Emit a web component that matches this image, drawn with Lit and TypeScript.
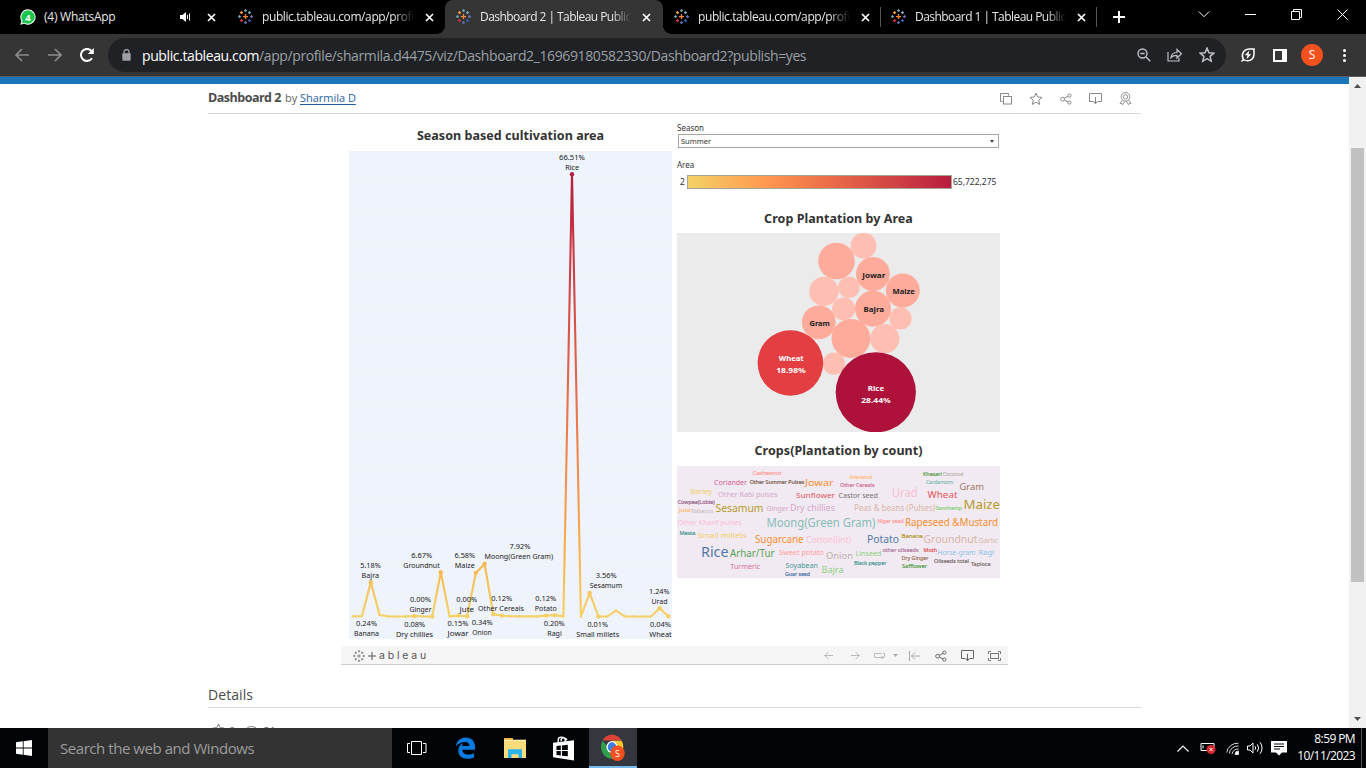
import { LitElement, html, svg, css } from "lit";
import { customElement } from "lit/decorators.js";

type Word = [string, number, number, number, number, string];

const WORDS: Word[] = [
  ["Cashewnut", 752.7, 28.7, 474.7, 5, "#ff9d9a"],
  ["Coriander", 714, 33, 485, 7, "#d0618e"],
  ["Other Summer Pulses", 749.7, 54.5, 484, 5.2, "#79604e"],
  ["Jowar", 805, 28.5, 485.5, 9.6, "#f28e2b"],
  ["Barley", 690.5, 21.5, 494, 7, "#f1ce63"],
  ["Other Rabi pulses", 718.3, 59, 497, 7, "#d4a6c8"],
  ["Sunflower", 796, 39, 498, 7.5, "#e15759"],
  ["Cowpea(Lobia)", 677.7, 37, 504, 5.5, "#946083"],
  ["Jute", 679, 11.5, 512.3, 5.5, "#ffbe7d"],
  ["Tobacco", 690.7, 22.5, 513, 6, "#bab0ac"],
  ["Sesamum", 715.5, 48, 512, 10.8, "#b6992d"],
  ["Ginger", 766.5, 22, 511, 7, "#d4a6c8"],
  ["Dry chillies", 790, 45, 511, 9, "#d4a6c8"],
  ["Other Kharif pulses", 677.5, 64.5, 525, 7.3, "#fabfd2"],
  ["Moong(Green Gram)", 766.5, 109, 527, 12.2, "#86bcb6"],
  ["Mesta", 679.5, 16, 535, 5.5, "#499894"],
  ["Small millets", 697.5, 49, 538, 7.7, "#f1ce63"],
  ["Sugarcane", 755, 48.5, 542.5, 10, "#f28e2b"],
  ["Cotton(lint)", 806, 45, 542.7, 8.5, "#fabfd2"],
  ["Rice", 701, 27.5, 557, 14, "#4e79a7"],
  ["Arhar/Tur", 730, 44.5, 557, 10.3, "#59a14f"],
  ["Sweet potato", 779, 45, 555, 7, "#ff9d9a"],
  ["Onion", 826, 27, 559, 9.8, "#bab0ac"],
  ["Turmeric", 730.3, 30, 569, 7, "#d37295"],
  ["Soyabean", 785.5, 32.5, 567.5, 7.3, "#499894"],
  ["Guar seed", 785, 25, 576, 5, "#4e79a7"],
  ["Bajra", 821.5, 22, 572.5, 9.2, "#8cd17d"],
  ["Arecanut", 849.5, 23, 479, 5, "#ffbe7d"],
  ["Other Cereals", 840, 34.5, 487, 5.5, "#d37295"],
  ["Castor seed", 838.5, 39.5, 498, 7, "#79706e"],
  ["Urad", 892, 25.5, 497, 12, "#fabfd2"],
  ["Khesari", 923, 19, 476, 5.2, "#59a14f"],
  ["Coconut", 943, 20.5, 476, 5.5, "#bab0ac"],
  ["Cardamom", 926, 27, 484, 5.5, "#86bcb6"],
  ["Gram", 959.5, 24.5, 490, 9.2, "#9d7660"],
  ["Wheat", 927.5, 30, 498, 9.8, "#e15759"],
  ["Peas & beans (Pulses)", 854, 81, 511, 8.2, "#d7b5a6"],
  ["Sannhemp", 935.5, 26.5, 510, 5.3, "#8cd17d"],
  ["Maize", 963.5, 36.5, 509, 13.3, "#b6992d"],
  ["Niger seed", 877.5, 26.2, 523, 5, "#ff9d9a"],
  ["Rapeseed &Mustard", 905, 93, 526, 10, "#f28e2b"],
  ["Potato", 867, 32, 542.5, 10, "#4e79a7"],
  ["Banana", 901.5, 21.5, 538, 5.3, "#b6992d"],
  ["Groundnut", 923.5, 54, 542.5, 11, "#d7b5a6"],
  ["Garlic", 978.5, 19.5, 543, 7, "#d7b5a6"],
  ["Linseed", 855.5, 26, 556, 7.3, "#8cd17d"],
  ["other oilseeds", 882.5, 36, 552, 5.5, "#b07aa1"],
  ["Moth", 923.5, 13.5, 552, 5.5, "#e15759"],
  ["Horse-gram", 937.5, 38, 555, 7.3, "#8dc1e6"],
  ["Ragi", 978.5, 15.5, 555, 7.3, "#8dc1e6"],
  ["Black pepper", 854, 32.5, 565, 5.3, "#499894"],
  ["Dry Ginger", 901.5, 27, 560, 5.5, "#9d7660"],
  ["Safflower", 902, 25, 568, 5.3, "#59a14f"],
  ["Oilseeds total", 934, 35, 563, 5.5, "#79706e"],
  ["Tapioca", 971, 19.5, 566, 5.5, "#79706e"],
];

const BUBBLES: [number, number, number, string][] = [
  [836.5, 261, 18.3, "#ffab9c"],
  [863.5, 245.7, 12.9, "#ffbeb2"],
  [873, 274, 17, "#ffab9c"],
  [902.8, 290.5, 17, "#ffab9c"],
  [823.9, 291.4, 14.6, "#ffbeb2"],
  [848.9, 287.4, 10.8, "#ffbeb2"],
  [843.6, 308.9, 11.5, "#ffbeb2"],
  [873, 308.7, 18, "#ffab9c"],
  [818.8, 322.3, 16.9, "#ffab9c"],
  [851, 338.5, 19.4, "#ffab9c"],
  [884.8, 338.7, 14.6, "#ffbeb2"],
  [900.4, 318.4, 11.1, "#ffbeb2"],
  [834, 363.7, 11.1, "#ffbeb2"],
  [790.4, 363, 32.8, "#e33f43"],
  [875.8, 392.3, 40.1, "#ae123a"],
];

const BUBBLE_LABELS: [string, number, number, number, string][] = [
  ["Jowar", 873.8, 277.8, 23, "#1b1b1b"],
  ["Maize", 903.7, 294, 22.5, "#1b1b1b"],
  ["Bajra", 873.8, 312.3, 20.5, "#1b1b1b"],
  ["Gram", 819.7, 326, 20.5, "#1b1b1b"],
  ["Wheat", 791.2, 360.6, 25, "#fff"],
  ["18.98%", 791, 372.5, 29.5, "#fff"],
  ["Rice", 876, 390.8, 16.5, "#fff"],
  ["28.44%", 876, 402.5, 29.5, "#fff"],
];

const LINE: [number, number][] = [
  [352.7, 616.4], [362, 616.1], [370.8, 582.3], [379.6, 615], [388.3, 616.4], [397, 616.5],
  [405.8, 616.4], [414.6, 616], [423.3, 616.4], [432.2, 616.6], [440.8, 572.3], [449.6, 616.4],
  [458.4, 615.6], [467.2, 616.4], [475.8, 572.9], [484.6, 564], [493.3, 614.2], [502, 615.6],
  [510.8, 616.3], [519.6, 616.4], [528.4, 616.4], [537.1, 616.4], [545.9, 615.6], [554.6, 615.1],
  [563.4, 616.4], [572, 174.2], [580.9, 616.5], [589.7, 593], [598.4, 616.5], [607.2, 616.5],
  [615.9, 610.7], [624.7, 616.4], [633.4, 616.5], [642.2, 616.5], [651, 616.4], [659.6, 608.2],
  [668.4, 616.2],
];
const MARKED = new Set([2, 7, 9, 10, 12, 13, 14, 15, 16, 17, 22, 23, 25, 27, 28, 35, 36]);

const LABELS: [string, number, number, number][] = [
  ["66.51%", 572, 160, 26], ["Rice", 572.2, 170, 14],
  ["5.18%", 370.5, 568, 20.5], ["Bajra", 370.3, 578, 17.5],
  ["6.67%", 421.7, 558, 21], ["Groundnut", 421.5, 568, 36.5],
  ["6.58%", 464.8, 558, 20.5], ["Maize", 464.8, 568, 20],
  ["7.92%", 520, 549, 21], ["Moong(Green Gram)", 518.8, 559, 68.5],
  ["3.56%", 606.2, 578, 21], ["Sesamum", 606, 588, 32.5],
  ["1.24%", 659.3, 594, 20.5], ["Urad", 659.5, 604, 16],
  ["0.00%", 420.5, 602, 21], ["Ginger", 420.5, 612, 22],
  ["0.00%", 466.7, 602, 21], ["Jute", 466.8, 612, 14.5],
  ["0.12%", 501.8, 601, 21], ["Other Cereals", 501, 611, 46],
  ["0.12%", 545.8, 601, 21], ["Potato", 545.8, 611, 22],
  ["0.24%", 366.6, 626, 21], ["Banana", 366.5, 636, 25],
  ["0.08%", 414.7, 627, 21], ["Dry chillies", 414.5, 637, 37],
  ["0.15%", 458, 626, 21], ["Jowar", 458, 636, 21],
  ["0.34%", 482.2, 625, 21], ["Onion", 482, 635, 19.5],
  ["0.20%", 554.3, 626, 21], ["Ragi", 554.5, 636, 14.5],
  ["0.01%", 597.7, 627, 20.5], ["Small millets", 597.7, 637, 43],
  ["0.04%", 660.5, 627, 21], ["Wheat", 660.5, 637, 22.5],
];

const plus = (x: number, y: number, r: number, c: string, w: number) =>
  svg`<path d="M${x - r} ${y}h${2 * r}M${x} ${y - r}v${2 * r}" stroke=${c} stroke-width=${w} fill="none"/>`;

/** The nine-plus Tableau mark; pass a single colour for the monochrome version. */
const tableauMark = (size: number, mono?: string) => {
  const w = mono ? 1 : 1.25;
  return html`<svg class="mark" width=${size} height=${size} viewBox="0 0 15 15">
    ${plus(7.5, 7.5, 2.5, mono ?? "#f98536", w)}
    ${plus(3.5, 3.5, 1.5, mono ?? "#f79a2e", w)} ${plus(11.5, 3.5, 1.5, mono ?? "#6fa6ba", w)}
    ${plus(3.5, 11.5, 1.5, mono ?? "#e02c42", w)} ${plus(11.5, 11.5, 1.5, mono ?? "#2f5fae", w)}
    ${plus(7.5, 1.5, 1.5, mono ?? "#7099a6", w)} ${plus(7.5, 13.5, 1.5, mono ?? "#5f6bab", w)}
    ${plus(1.5, 7.5, 1.5, mono ?? "#7099a6", w)} ${plus(13.5, 7.5, 1.5, mono ?? "#6c6fb8", w)}
  </svg>`;
};

const cross = html`<svg class="x" width="9" height="9" viewBox="0 0 9 9"><path d="M1 1l7 7M8 1l-7 7" stroke="#fff" stroke-width="1.7"/></svg>`;

const shareIcon = (c: string) => html`<svg width="12" height="12" viewBox="0 0 12 12" fill="none" stroke=${c}>
  <circle cx="2.6" cy="6.2" r="1.9"/><circle cx="9.4" cy="2.6" r="1.6"/><circle cx="9.4" cy="9.6" r="1.6"/>
  <path d="M4.3 5.3L8 3.4M4.3 7.1L8 9"/></svg>`;
const downloadIcon = (c: string) => html`<svg width="13" height="12" viewBox="0 0 13 12" fill="none" stroke=${c}>
  <path d="M4.5 8.5H.5v-8h12v8h-4M6.5 4v7"/><path d="M4.3 8.8l2.2 2.4 2.2-2.4z" fill=${c} stroke="none"/></svg>`;
const star = (s: number, c: string, w: number) => html`<svg width=${s} height=${s} viewBox="0 0 14 14">
  <path d="M7 1l1.7 4 4.3.4-3.3 2.8 1 4.3L7 10.2l-3.7 2.3 1-4.3L1 5.4 5.3 5z" fill="none" stroke=${c} stroke-width=${w}/></svg>`;

@customElement("app-root")
export class AppRoot extends LitElement {
  static styles = css`
    :host { display: flex; flex-direction: column; width: 1366px; height: 768px; overflow: hidden;
      font-family: "Open Sans", "Noto Sans", sans-serif; background: #fff; }
    * { box-sizing: border-box; }
    svg { display: block; flex: none; }
    .tabs { height: 34px; background: #000; display: flex; padding-left: 10px; flex: none; color: #e8e8e8; }
    .tab { width: 218px; flex: none; display: flex; align-items: center; padding-left: 10px; position: relative; font-size: 12px; height: 34px; }
    .tab:nth-child(2) { width: 217px; }
    .tab:nth-child(3), .tab:nth-child(4) { padding-left: 11px; }
    .tab:nth-child(5) { width: 216px; }
    .tab .mark { margin-top: -1px; }
    .tab .t { margin-left: 9px; width: 152px; white-space: nowrap; overflow: hidden; letter-spacing: -0.4px; line-height: 18px;
      -webkit-mask-image: linear-gradient(90deg, #000 87%, transparent 100%); margin-top: -1px; }
    .tab .t.dash { letter-spacing: -0.55px; width: 151px; }
    .tab .t.wa { width: 136px; letter-spacing: -0.25px; margin-left: 8px; -webkit-mask-image: none; }
    .tab .x { margin-left: 11px; }
    .tab .x.first { margin-left: 16px; }
    .tab.sep { border-right: 1px solid #555; height: 20px; margin-top: 7px; }
    .tab.on { background: #353535; border-radius: 8px 8px 0 0; }
    .tab.on::before, .tab.on::after { content: ""; position: absolute; bottom: 0; width: 8px; height: 8px; }
    .tab.on::before { left: -8px; background: radial-gradient(circle at 0 0, transparent 7.5px, #353535 8px); }
    .tab.on::after { right: -8px; background: radial-gradient(circle at 100% 0, transparent 7.5px, #353535 8px); }
    .plus { margin: 11px 0 0 16px; }
    .win { margin-left: auto; display: flex; align-items: center; height: 29px; gap: 35px; padding-right: 18px; }
    .bar { height: 43px; flex: none; background: #353535; border-bottom: 1px solid #5c5c5c; display: flex; align-items: center; padding-left: 14px; }
    .nav { display: flex; gap: 17px; align-items: center; width: 94px; }
    .omni { width: 1118px; height: 34px; border-radius: 17px; background: #202124; display: flex; align-items: center; padding: 0 11px 0 14px; font-size: 14px; color: #9aa0a6; }
    .url { margin-left: 11px; letter-spacing: -0.39px; flex: 1; white-space: nowrap; }
    .url b { font-weight: 400; color: #fff; }
    .omni .ic { display: flex; gap: 16px; align-items: center; }
    .ext { display: flex; align-items: center; margin-left: 14px; }
    .panel { margin-left: 17px; }
    .av { width: 22px; height: 22px; border-radius: 50%; background: #f4511e; color: #fff; font-size: 12px; line-height: 22px; text-align: center; margin: 0 20px 0 14px; }
    .main { flex: 1; display: flex; min-height: 0; }
    .page { width: 1349px; overflow: hidden; border-top: 7px solid #1b75bb; padding: 0 209px 0 208px; }
    .scroll { width: 17px; background: #f1f1f1; display: flex; flex-direction: column; align-items: center; padding: 7px 0; }
    .thumb { width: 13px; height: 434px; background: #c1c1c1; margin-top: 60px; margin-bottom: auto; }
    .head { height: 30px; border-bottom: 1px solid #d9d9d9; width: 933px; display: flex; align-items: center; color: #666; }
    .head h1 { font-size: 12.5px; margin: -2px 4px 0 0; color: #4a4a4a; font-weight: 700; letter-spacing: -0.5px; }
    .head span { font-size: 11px; letter-spacing: -0.02px; margin-top: -2px; }
    .head a { color: #1f5f9e; text-decoration: underline; text-underline-offset: 2px; }
    .acts { margin-left: auto; display: flex; gap: 17px; align-items: center; padding-right: 9px; }
    .viz { width: 667px; margin-left: 133px; height: 551px; display: flex; flex-direction: column; }
    .cols { display: flex; gap: 5px; padding-left: 8px; height: 532px; font-family: "Noto Sans", sans-serif; }
    .left, .right { width: 323px; display: flex; flex-direction: column; }
    h2 { margin: 0; text-align: center; font-size: 12.5px; color: #333; font-weight: 700; white-space: nowrap; }
    .left h2 { height: 37px; line-height: 43px; letter-spacing: .05px; }
    .small { font-size: 8px; color: #333; line-height: 10px; }
    .sel { height: 14px; width: 321px; margin: 1px 0 0 1px; border: 1px solid #a6a6a6; display: flex; align-items: center; justify-content: space-between; padding: 0 4px 0 2px; font-size: 7.5px; }
    .season { margin-top: 9px; }
    .area { margin-top: 12px; }
    .legend { display: flex; height: 14px; align-items: center; padding-left: 3px; margin-top: 5px; font-size: 8.5px; }
    .lo { width: 5px; }
    .ramp { width: 265px; height: 14px; border: 1px solid #a6a69a; margin: 0 1px 0 2px;
      background: linear-gradient(90deg, #f4d166, #ff984f 30%, #ea6a48 55%, #cf4044 80%, #b71d3e); }
    .t2 { height: 44px; line-height: 59px; letter-spacing: .05px; }
    .t3 { height: 34px; line-height: 37px; letter-spacing: .08px; }
    .vbar { height: 19px; background: #f5f5f5; border-bottom: 1px solid #ccc; display: flex; align-items: center; padding: 1px 7px 0 12px; }
    .brand { font: 10.5px "Inter", sans-serif; letter-spacing: 2.8px; color: #555; margin-left: 3px; display: flex; align-items: center; }
    .brand svg { margin-right: 3px; }
    .vbar .r { margin-left: auto; display: flex; align-items: center; }
    .redo { margin-left: 18px; } .replay { margin-left: 13px; } .caret { margin-left: 7px; }
    .revert { margin: 0 15px 0 11px; } .dl { margin-left: 14px; } .full { margin-left: 14px; }
    .details { margin-top: 20px; height: 23px; width: 933px; border-bottom: 1px solid #d9d9d9; font-size: 14px; line-height: 20px; color: #4a4a4a; letter-spacing: .08px; }
    .stats { display: flex; margin: 16px 0 0 4px; gap: 4px; font-size: 11px; color: #666; line-height: 14px; align-items: flex-start; }
    .stats svg { margin-top: -1px; }
    .stats .eye { margin: 1px 0 0 5px; }
    .task { height: 40px; flex: none; background: #020408; display: flex; align-items: center; }
    .start { width: 48px; display: flex; justify-content: center; }
    .search { width: 344px; height: 40px; background: #333; color: #9c9c9c; font-size: 15px; line-height: 40px; padding-left: 12px; letter-spacing: -0.45px; }
    .app { width: 49px; height: 40px; display: flex; justify-content: center; align-items: center; }
    .app.on { width: 48px; margin-left: 1px; background: #34383e; border-bottom: 2px solid #76b9ed; padding-top: 2px; }
    .tray { margin-left: auto; display: flex; align-items: center; color: #fff; height: 40px; }
    .batt { margin-left: 11px; } .wifi { margin-left: 10px; } .vol { margin-left: 8px; } .msg { margin-left: 7px; }
    .clock { width: 65px; font-size: 12px; line-height: 17px; text-align: right; letter-spacing: -0.6px; margin-left: 3px; padding-bottom: 3px; white-space: nowrap; }
    .peek { width: 5px; height: 40px; border-left: 1px solid #555; margin-left: 6px; }
  `;

  private tab(text: string, cls: string) {
    return html`<div class="tab ${cls}">${tableauMark(15)}<span class="t ${text[0] === "D" ? "dash" : ""}">${text}</span>${cross}</div>`;
  }

  private lineChart() {
    const pts = LINE.map((p) => p.join(",")).join(" ");
    return html`<svg width="323" height="488" viewBox="349 151 323 488">
      <defs><linearGradient id="heat" gradientUnits="userSpaceOnUse" x1="0" y1="616" x2="0" y2="174">
        <stop offset="0" stop-color="#f4d166"/><stop offset=".12" stop-color="#f9b64f"/><stop offset=".3" stop-color="#f3934f"/>
        <stop offset=".55" stop-color="#e2644b"/><stop offset=".8" stop-color="#cc3c45"/><stop offset="1" stop-color="#b71d3e"/>
      </linearGradient></defs>
      <rect x="349" y="151" width="323" height="488" fill="#eff3fb"/>
      ${[182, 214, 246, 278, 310, 342, 374, 406, 438, 470, 502, 534, 566, 598].map((y) => svg`<path d="M349 ${y}.5h323" stroke="#eef2f7"/>`)}
      <polyline points=${pts} fill="none" stroke="url(#heat)" stroke-width="2.1" stroke-linejoin="round"/>
      ${LINE.map(([x, y], i) => svg`<circle cx=${x} cy=${y} r=${MARKED.has(i) ? 2.2 : 1.2} fill="url(#heat)"/>`)}
      ${LABELS.map(([t, x, y, w]) => svg`<text x=${x} y=${y} text-anchor="middle" font-size="7.3" fill="#222" textLength=${w} lengthAdjust="spacingAndGlyphs">${t}</text>`)}
    </svg>`;
  }

  private bubbles() {
    return html`<svg width="323" height="199" viewBox="677 233 323 199">
      <rect x="677" y="233" width="323" height="199" fill="#ebebeb"/>
      ${BUBBLES.map(([x, y, r, c]) => svg`<circle cx=${x} cy=${y} r=${r} fill=${c}/>`)}
      ${BUBBLE_LABELS.map(([t, x, y, w, c]) => svg`<text x=${x} y=${y} text-anchor="middle" font-size="7.8" font-weight="700" fill=${c} textLength=${w} lengthAdjust="spacingAndGlyphs">${t}</text>`)}
    </svg>`;
  }

  private cloud() {
    return html`<svg width="323" height="112" viewBox="677 466 323 112">
      <rect x="677" y="466" width="323" height="112" fill="#f2eaf3"/>
      ${WORDS.map(([t, x, w, y, s, c]) => svg`<text x=${x} y=${y} font-size=${s} fill=${c} stroke=${c} stroke-width=${s < 6 ? 0.2 : 0} textLength=${w} lengthAdjust="spacingAndGlyphs">${t}</text>`)}
    </svg>`;
  }

  render() {
    return html`
      <div class="tabs">
        <div class="tab">
          <svg width="16" height="16" viewBox="0 0 16 16"><path d="M8 .3a7.7 7.7 0 1 1-3.7 14.5L.3 15.8l1.1-3.9A7.7 7.7 0 0 1 8 .3z" fill="#fff"/><path d="M8 1.3a6.7 6.7 0 1 1-3.5 12.4l-2.7.7.8-2.6A6.7 6.7 0 0 1 8 1.3z" fill="#1bc64c"/><text x="8" y="11.5" font-size="9.5" font-weight="700" fill="#fff" text-anchor="middle">4</text></svg>
          <span class="t wa">(4) WhatsApp</span>
          <svg width="11" height="10" viewBox="0 0 11 10"><path d="M0 3h2.5L6 0v10L2.5 7H0z" fill="#fff"/><path d="M7.5 3v4M9.5 1.5v7" stroke="#fff"/></svg>
          <svg class="x first" width="9" height="9" viewBox="0 0 9 9"><path d="M1 1l7 7M8 1l-7 7" stroke="#fff" stroke-width="1.7"/></svg>
        </div>
        ${this.tab("public.tableau.com/app/profile", "")}
        ${this.tab("Dashboard 2 | Tableau Public", "on")}
        ${this.tab("public.tableau.com/app/profile", "sep")}
        ${this.tab("Dashboard 1 | Tableau Public", "sep")}
        <svg class="plus" width="12" height="12" viewBox="0 0 12 12"><path d="M6 0v12M0 6h12" stroke="#fff" stroke-width="2"/></svg>
        <div class="win">
          <svg width="12" height="7" viewBox="0 0 12 7"><path d="M1 .7l5 5 5-5" stroke="#fff" fill="none"/></svg>
          <svg width="11" height="11" viewBox="0 0 11 11"><path d="M0 5.5h11" stroke="#fff"/></svg>
          <svg width="11" height="11" viewBox="0 0 11 11"><path d="M.5 2.5h8v8h-8zM2.5 2.5v-2h8v8h-2" stroke="#fff" fill="none"/></svg>
          <svg width="11" height="11" viewBox="0 0 11 11"><path d="M.5.5l10 10M10.5.5l-10 10" stroke="#fff"/></svg>
        </div>
      </div>
      <div class="bar">
        <div class="nav">
          <svg width="16" height="14" viewBox="0 0 16 14"><path d="M15 7H2M8 1L2 7l6 6" stroke="#8c8c8c" stroke-width="1.7" fill="none"/></svg>
          <svg width="16" height="14" viewBox="0 0 16 14"><path d="M1 7h13M8 1l6 6-6 6" stroke="#8c8c8c" stroke-width="1.7" fill="none"/></svg>
          <svg width="14" height="14" viewBox="0 0 14 14"><path d="M12 10.2A6 6 0 1 1 11.5 3" stroke="#fff" stroke-width="2" fill="none"/><path d="M13.8 0v6H7.8z" fill="#fff"/></svg>
        </div>
        <div class="omni">
          <svg width="9" height="12" viewBox="0 0 9 12"><path d="M2 5V3a2.5 2.5 0 0 1 5 0v2" stroke="#9aa0a6" stroke-width="1.3" fill="none"/><rect x=".3" y="4.3" width="8.4" height="7.4" rx="1" fill="#9aa0a6"/></svg>
          <span class="url"><b>public.tableau.com</b>/app/profile/sharmila.d4475/viz/Dashboard2_16969180582330/Dashboard2?publish=yes</span>
          <div class="ic">
            <svg width="14" height="14" viewBox="0 0 14 14" fill="none" stroke="#bdc1c6" stroke-width="1.4"><circle cx="5.5" cy="5.5" r="4.5"/><path d="M3.3 5.5h4.4M9 9l4.3 4.3" /></svg>
            <svg width="16" height="14" viewBox="0 0 16 14" fill="none" stroke="#bdc1c6" stroke-width="1.2"><path d="M1 4v9h11v-3"/><path d="M4 9.5c.5-3.5 2.5-5 6-5V1.5l4.5 4.3L10 10V7.3c-3 0-4.5.5-6 2.2z"/></svg>
            ${star(16, "#bdc1c6", 1.3)}
          </div>
        </div>
        <div class="ext">
          <svg width="16" height="16" viewBox="0 0 16 16" fill="none" stroke="#fff" stroke-width="1.5"><path d="M1.5 14.5l2-2C.8 8.5 3 2.5 9 2h5v5c0 6-6 8.5-10.5 5.5"/><path d="M9.3 3.5L4.8 8.3H7.5L6.5 12.3l4.7-5.1H8.5z" fill="#fff" stroke="none"/></svg>
          <svg class="panel" width="14" height="13" viewBox="0 0 14 13"><path d="M1 1h12v11H1z" fill="none" stroke="#fff" stroke-width="2"/><path d="M9 0h5v13H9z" fill="#fff"/></svg>
          <div class="av">S</div>
          <svg width="3" height="13" viewBox="0 0 3 13" fill="#fff"><circle cx="1.5" cy="1.5" r="1.5"/><circle cx="1.5" cy="6.5" r="1.5"/><circle cx="1.5" cy="11.5" r="1.5"/></svg>
        </div>
      </div>
      <div class="main">
        <div class="page">
          <div class="head">
            <h1>Dashboard 2</h1><span>by <a>Sharmila D</a></span>
            <div class="acts">
              <svg width="12" height="12" viewBox="0 0 12 12" fill="none" stroke="#888"><path d="M2.5 8.5h-2v-8h8v2"/><rect x="3.5" y="3.5" width="8" height="7.5"/></svg>
              ${star(14, "#888", 1)} ${shareIcon("#888")} ${downloadIcon("#888")}
              <svg width="13" height="13" viewBox="0 0 13 13" fill="none" stroke="#888" stroke-width=".9"><circle cx="6.5" cy="4.8" r="4.3"/><circle cx="6.5" cy="4.8" r="2.2"/><path d="M3.5 8L1 11.5l1.8-.2.7 1.5L6 9M9.5 8l2.5 3.5-1.8-.2-.7 1.5L7 9"/></svg>
            </div>
          </div>
          <div class="viz">
            <div class="cols">
              <div class="left"><h2>Season based cultivation area</h2>${this.lineChart()}</div>
              <div class="right">
                <div class="small season">Season</div>
                <div class="small sel">Summer<svg width="4" height="3" viewBox="0 0 4 3"><path d="M0 0h4L2 3z" fill="#444"/></svg></div>
                <div class="small area">Area</div>
                <div class="small legend"><span class="lo">2</span><div class="ramp"></div>65,722,275</div>
                <h2 class="t2">Crop Plantation by Area</h2>
                ${this.bubbles()}
                <h2 class="t3">Crops(Plantation by count)</h2>
                ${this.cloud()}
              </div>
            </div>
            <div class="vbar">
              ${tableauMark(12, "#777")}
              <span class="brand"><svg width="8" height="8" viewBox="0 0 8 8"><path d="M4 0v8M0 4h8" stroke="#555"/></svg>ableau</span>
              <div class="r">
                <svg width="9" height="9" viewBox="0 0 9 9" fill="none" stroke="#bbb"><path d="M9 4.5H.8M4.5.7L.8 4.5l3.7 3.8"/></svg>
                <svg class="redo" width="9" height="9" viewBox="0 0 9 9" fill="none" stroke="#bbb"><path d="M0 4.5h8.2M4.5.7l3.7 3.8-3.7 3.8"/></svg>
                <svg class="replay" width="13" height="8" viewBox="0 0 13 8" fill="none" stroke="#bbb"><path d="M8.5 1.5h-7v4h9M11.5 5V1.5H10"/><path d="M8.5 3.5l3 2-3 2z" fill="#bbb" stroke="none"/></svg>
                <svg class="caret" width="5" height="3" viewBox="0 0 5 3"><path d="M0 0h5L2.5 3z" fill="#aaa"/></svg>
                <svg class="revert" width="11" height="10" viewBox="0 0 11 10" fill="none" stroke="#aaa"><path d="M.5 0v10M11 5H2.5M6 1.5L2.5 5 6 8.5"/></svg>
                ${shareIcon("#666")}<div class="dl">${downloadIcon("#666")}</div>
                <svg class="full" width="13" height="10" viewBox="0 0 13 10" fill="none" stroke="#777"><path d="M.5 3V.5H3M10 .5h2.5V3M12.5 7v2.5H10M3 9.5H.5V7"/><rect x="2.5" y="2.5" width="8" height="5"/></svg>
              </div>
            </div>
          </div>
          <div class="details">Details</div>
          <div class="stats">${star(13, "#777", 1)}<span>0</span><svg class="eye" width="15" height="12" viewBox="0 0 15 12" fill="none" stroke="#777"><ellipse cx="7.5" cy="6" rx="6" ry="4.5"/></svg><span>21</span></div>
        </div>
        <div class="scroll">
          <svg width="7" height="4" viewBox="0 0 7 4"><path d="M0 4h7L3.5 0z" fill="#505050"/></svg>
          <div class="thumb"></div>
          <svg width="7" height="4" viewBox="0 0 7 4"><path d="M0 0h7L3.5 4z" fill="#505050"/></svg>
        </div>
      </div>
      <div class="task">
        <div class="start"><svg width="16" height="16" viewBox="0 0 16 16" fill="#fff"><path d="M0 2.3l6.8-1v6.2H0zM7.6 1.2L16 0v7.5H7.6zM0 8.4h6.8v6.3L0 13.7zM7.6 8.4H16V16l-8.4-1.2z"/></svg></div>
        <div class="search">Search the web and Windows</div>
        <div class="app"><svg width="20" height="14" viewBox="0 0 20 14" fill="none" stroke="#fff"><path d="M4.5.5h10v13h-10zM3 2.5H.5v9H3M16 2.5h3v9h-3"/></svg></div>
        <div class="app"><svg width="21" height="22" viewBox="0 0 21 22"><path d="M.8 9.5C1.5 4 5.5.4 10.8.4c6 0 9.3 4.3 9.3 9.7v2.6H7.3c.3 3.3 3 4.8 6 4.8 2.2 0 4-.6 5.8-1.6v4.3c-1.9 1-4.3 1.5-6.7 1.5-5.7 0-9.1-3.3-9.1-8 0-3.5 1.7-6.3 4.8-7.7-.7.9-1 2-1.1 3h7.4c0-2.4-1.2-4.1-4.2-4.1C6.5 4.9 3 6.5.8 9.5z" fill="#0a7be0"/></svg></div>
        <div class="app"><svg width="22" height="20" viewBox="0 0 22 22" preserveAspectRatio="none"><path d="M0 0h9v3H0z" fill="#e8b43c"/><path d="M0 2h22v20H0z" fill="#fbdc7d"/><path d="M4 22v-9.5h14V22h-3.5v-4h-7v4z" fill="#2bb4ea"/><path d="M0 2h22v1.2H0z" fill="#fdeeb4"/></svg></div>
        <div class="app"><svg width="21" height="25" viewBox="0 0 18 24" preserveAspectRatio="none"><path d="M0 6.5L18 4v19.5L0 20.5z" fill="#fff"/><path d="M4.5 6V3.5c0-3 5-3.5 6 0V6M7 5V3c1-2 4-1.5 5 1" stroke="#fff" fill="none" stroke-width="1.2"/><path d="M3 9.5l3.7-.4v4.4H3zM7.7 9l5-.6v5.1h-5zM3 14.5h3.7v4.2L3 18.3zM7.7 14.5h5v5l-5-.6z" fill="#020408"/></svg></div>
        <div class="app on"><svg width="26" height="28" viewBox="0 0 26 26" preserveAspectRatio="none"><path d="M2.5 6A11 11 0 0 1 21.5 6H12z" fill="#db4437"/><path d="M2.5 6.2A11.3 11.3 0 0 0 11 23l5-9-6 .5z" fill="#2f9e4f"/><path d="M11.5 23.2A11.3 11.3 0 0 0 21.7 6.3H12l4.5 7z" fill="#f9c62f"/><circle cx="12" cy="12" r="5.6" fill="#fff"/><circle cx="12" cy="12" r="4.3" fill="#3b7de0"/><circle cx="17.5" cy="17.8" r="7.2" fill="#f4511e"/><text x="17.5" y="21" font-size="9" fill="#fff" text-anchor="middle">S</text></svg></div>
        <div class="tray">
          <svg width="12" height="7" viewBox="0 0 12 7"><path d="M.5 6.5L6 1l5.5 5.5" stroke="#fff" fill="none" stroke-width="1.2"/></svg>
          <svg class="batt" width="16" height="12" viewBox="0 0 16 12"><path d="M1 3v-1.5h13v7H1V3" fill="none" stroke="#fff"/><path d="M3 3.5v3" stroke="#fff"/><circle cx="11" cy="7.5" r="4.5" fill="#d9242c"/><path d="M9.3 5.8l3.4 3.4M12.7 5.8L9.3 9.2" stroke="#fff"/></svg>
          <svg class="wifi" width="13" height="13" viewBox="0 0 13 13" fill="none" stroke="#ddd"><path d="M.7 10.5A11 11 0 0 1 12.5 1.2M3.3 11.5A8.5 8.5 0 0 1 12.5 4M6 12a6 6 0 0 1 6.5-5" /><path d="M9 12.5a3.5 3.5 0 0 1 3.5-3.5v3.5z" fill="#fff"/></svg>
          <svg class="vol" width="17" height="14" viewBox="0 0 17 14" fill="none" stroke="#fff"><path d="M.5 5h2.5l3-3v10L3 9H.5z"/><path d="M8 5.2a3 3 0 0 1 0 3.6M10.3 3.4a6 6 0 0 1 0 7.2M13 1.3a9 9 0 0 1 0 11.4"/></svg>
          <svg class="msg" width="16" height="16" viewBox="0 0 16 16"><path d="M0 1h16v11.5h-5L8 15.5 5 12.5H0z" fill="#fff"/><path d="M3 4h10M3 6.5h10M3 9h6" stroke="#020408"/></svg>
          <div class="clock">8:59 PM<br>10/11/2023</div>
          <div class="peek"></div>
        </div>
      </div>`;
  }
}
